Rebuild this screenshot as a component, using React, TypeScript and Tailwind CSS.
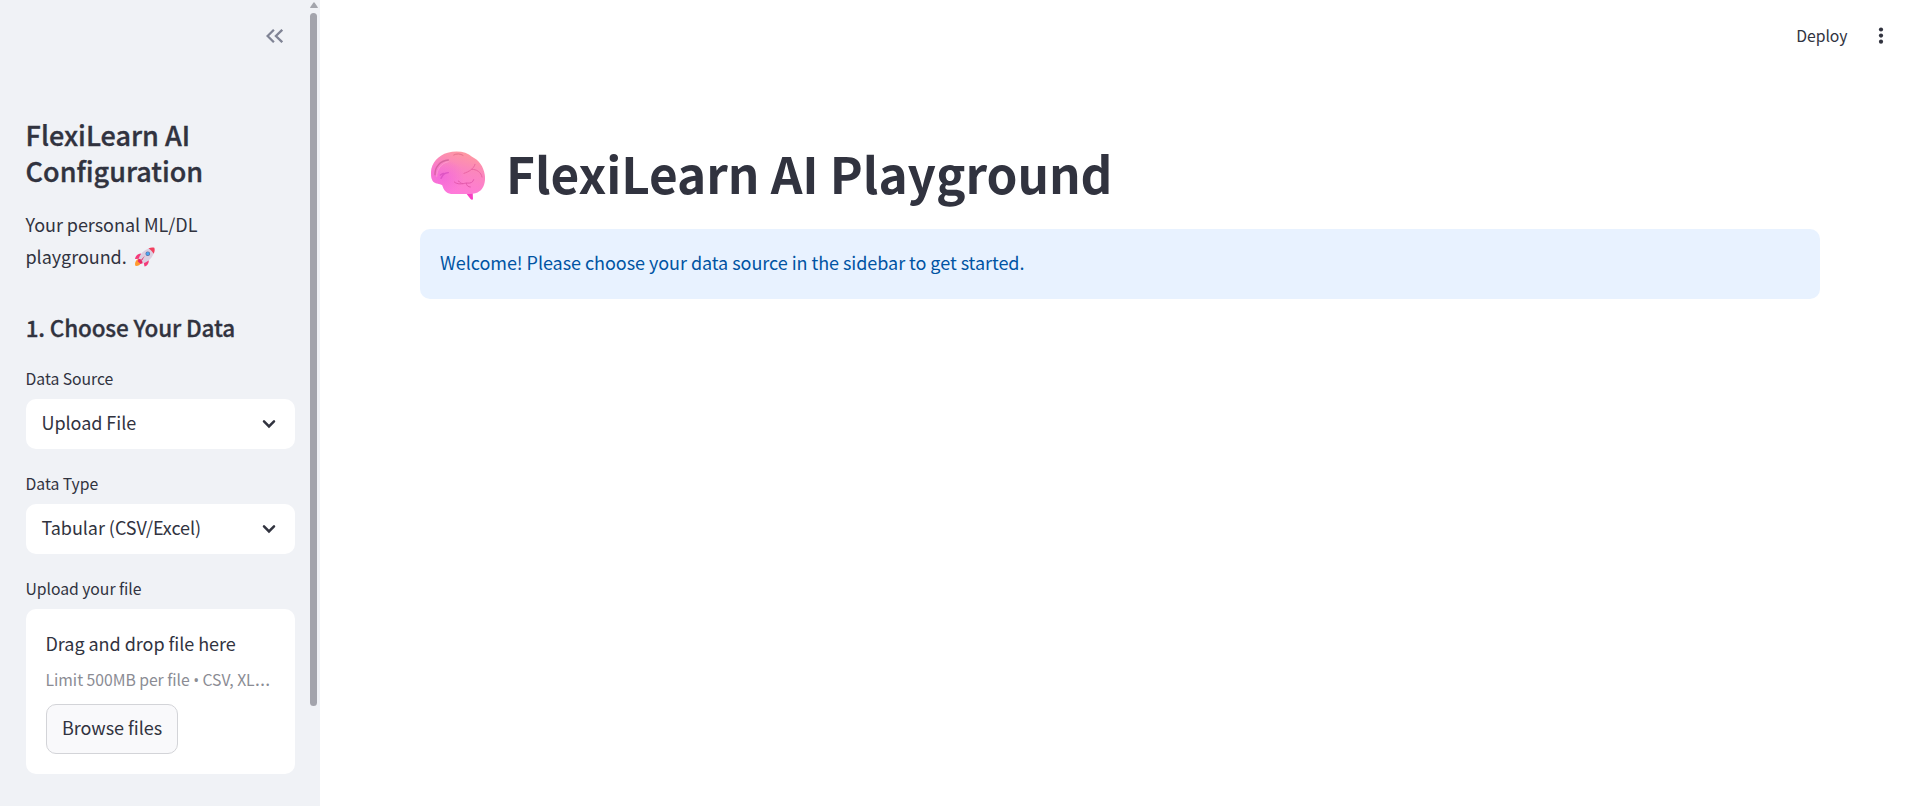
import React from "react";

function Brain() {
  return (
    <svg viewBox="0 0 165 150" className="h-[50px] w-[55px] shrink-0" aria-hidden="true">
      <defs>
        <linearGradient id="brainFill" x1="0.75" y1="0" x2="0.35" y2="1">
          <stop offset="0" stopColor="#ff9c9c" />
          <stop offset="0.4" stopColor="#fb86bd" />
          <stop offset="1" stopColor="#ff78dc" />
        </linearGradient>
        <radialGradient id="brainShade" cx="0.2" cy="0.6" r="0.42">
          <stop offset="0" stopColor="#f062dd" stopOpacity="0.7" />
          <stop offset="1" stopColor="#f062dd" stopOpacity="0" />
        </radialGradient>
      </defs>
      <path d="M103 124 L125 124 L126 145 Q122 148 118 143 Z" fill="#f83fc4" />
      <path d="M0 67 C-1 38 22 12 50 5 C78 -3 107 2 123 17 C144 27 158 47 161 70 C165 92 158 113 145 121 C139 127 128 129 116 129 L60 129 C45 127 37 116 34 103 C28 97 10 101 4 88 C1 82 0 75 0 67 Z" fill="url(#brainFill)" />
      <path d="M0 67 C-1 38 22 12 50 5 C78 -3 107 2 123 17 C144 27 158 47 161 70 C165 92 158 113 145 121 C139 127 128 129 116 129 L60 129 C45 127 37 116 34 103 C28 97 10 101 4 88 C1 82 0 75 0 67 Z" fill="url(#brainShade)" />
      <g fill="none" strokeLinecap="round" strokeWidth="3" opacity="0.8">
        <path d="M12 71 C11 50 26 29 52 27" stroke="#cf5f98" strokeWidth="4" />
        <path d="M17 76 C17 56 30 36 52 32" stroke="#ff9fd0" strokeWidth="3" />
        <path d="M68 12 C76 7 88 8 96 13" stroke="#e06a87" />
        <path d="M30 82 C36 70 40 66 52 65 M40 68 C36 66 33 68 28 72" stroke="#d84fc0" strokeWidth="4" />
        <path d="M132 40 C128 54 114 62 99 67 M122 55 C136 54 151 64 153 78" stroke="#e75e9e" />
        <path d="M70 93 C78 101 94 99 106 96 C119 98 126 94 128 86 M82 90 C88 92 88 98 95 98 M106 97 C106 104 112 108 118 108" stroke="#df52a6" />
      </g>
    </svg>
  );
}

function Rocket() {
  return (
    <svg viewBox="0 0 64 60" className="ml-[7.5px] inline-block h-[20px] w-[21px] align-[-3px]" aria-hidden="true">
      <path d="M14 36 C3 40 2 51 4 57 C13 58 20 54 22 45 Z" fill="#ff9b2f" />
      <path d="M22 19 C10 19 4 29 3 36 L19 35 Z M45 40 C46 51 39 57 32 59 L29 44 Z" fill="#f43b7a" />
      <path d="M14 37 C17 23 30 7 48 3 L61 14 C58 31 43 46 25 50 Z" fill="#dccfe0" />
      <path d="M44 4 C51 0 58 0 62 2 C64 7 63 15 60 20 C56 13 51 8 44 4 Z" fill="#f2405f" />
      <path d="M13 37 C19 34 27 42 26 49 L20 51 L11 43 Z M33 26 L25 40 L20 41 Z" fill="#e92b68" />
      <circle cx="42" cy="20" r="7" fill="#5b6b9d" />
      <circle cx="42" cy="20" r="5" fill="#4aa5f2" />
    </svg>
  );
}

function Label({ children }: { children: React.ReactNode }) {
  return (
    <label className="-ml-[0.5px] mb-[7px] block pt-px text-[15.75px] leading-[26px] tracking-[-0.04px]">
      {children}
    </label>
  );
}

function Select({ label, value }: { label: string; value: string }) {
  return (
    <div className="mb-[21px]">
      <Label>{label}</Label>
      <div className="flex h-[50px] items-center justify-between rounded-[10px] bg-white pr-[19px] pl-[15.5px]">
        <span className="pb-1 text-[18px] leading-[30px] tracking-[-0.05px]">{value}</span>
        <svg viewBox="0 0 14 10" className="h-[10px] w-[14px]" aria-hidden="true">
          <path d="M2 2.4 L7 7.4 L12 2.4" fill="none" stroke="#31333f" strokeWidth="2.5" strokeLinecap="round" />
        </svg>
      </div>
    </div>
  );
}

export default function App() {
  return (
    <div className="flex h-[806px] w-full overflow-hidden bg-white font-['Noto_Sans_CJK_SC',sans-serif] text-[#31333f]">
      <aside className="flex w-[320px] shrink-0 bg-[#f0f2f6]">
        <div className="flex w-[309px] flex-col pr-[14px] pl-[26px]">
          <div className="flex h-[117px] justify-end pt-[29px] pr-[12px]">
            <svg viewBox="0 0 17 14" className="h-[14px] w-[17px]" aria-hidden="true">
              <path d="M7.9 0.8 L1.6 7 L7.9 13.2 M16.2 0.8 L9.9 7 L16.2 13.2" fill="none" stroke="#808495" strokeWidth="2.3" />
            </svg>
          </div>
          <h1 className="-ml-[0.4px] text-[27px] leading-[36px] font-medium [-webkit-text-stroke:0.35px_#31333f]">
            FlexiLearn AI
            <br />
            Configuration
          </h1>
          <p className="mt-[19px] -ml-[0.5px] text-[18px] leading-[32px] tracking-[-0.05px]">
            Your personal ML/DL
            <br />
            playground.
            <Rocket />
          </p>
          <h3 className="mt-10 mb-[23px] -ml-[0.3px] text-[22.5px] leading-[30px] font-medium tracking-[-0.16px] [-webkit-text-stroke:0.3px_#31333f]">
            1. Choose Your Data
          </h3>
          <Select label="Data Source" value="Upload File" />
          <Select label="Data Type" value="Tabular (CSV/Excel)" />
          <Label>Upload your file</Label>
          <div className="flex h-[165px] flex-col items-start rounded-[10px] bg-white px-[19.5px] pt-[19px]">
            <span className="text-[18px] leading-[30px] tracking-[-0.04px]">Drag and drop file here</span>
            <span className="mt-[9px] text-[15.75px] leading-[26px] tracking-[-0.04px] whitespace-nowrap text-[#8b8c94]">
              Limit 500MB per file <span className="font-['Open_Sans',sans-serif]">•</span> CSV, XL
              <span className="font-['Open_Sans',sans-serif] text-[20px] leading-none">…</span>
            </span>
            <button className="mt-[11px] ml-[0.5px] h-[50px] w-[132px] rounded-[10px] border border-[#d3d4d8] bg-[#f9f9fb] pb-1 text-[18px] leading-[30px] tracking-[-0.05px]">
              Browse files
            </button>
          </div>
        </div>
        <div className="flex w-[9px] flex-col items-center pt-[2px]">
          <svg viewBox="0 0 8 6" className="h-[6px] w-[8px]" aria-hidden="true">
            <path d="M0.7 6 Q-0.2 6 0.4 5 L3.3 0.7 Q4 -0.2 4.7 0.7 L7.6 5 Q8.2 6 7.3 6 Z" fill="#a3a5ac" />
          </svg>
          <div className="mt-[5px] h-[693px] w-[7px] rounded-full bg-[#a3a4ac]" />
        </div>
      </aside>
      <main className="flex min-w-0 flex-1 flex-col">
        <header className="flex h-[75px] items-start justify-end pr-[32.5px]">
          <span className="pt-[23px] text-[15.75px] leading-[26px] tracking-[-0.03px]">Deploy</span>
          <svg viewBox="0 0 6 18" className="mt-[27px] ml-[30px] h-[18px] w-[6px]" aria-hidden="true">
            <g fill="#31333f">
              <circle cx="3" cy="2.5" r="2.1" />
              <circle cx="3" cy="8.6" r="2.1" />
              <circle cx="3" cy="14.7" r="2.1" />
            </g>
          </svg>
        </header>
        <div className="pr-[96px] pl-[100px]">
          <div className="flex h-[154px] items-start pt-[76px] pl-[11px]">
            <Brain />
            <h1 className="-mt-[15px] ml-[20px] text-[49.5px] leading-[74px] font-bold tracking-[-0.04px] whitespace-nowrap">
              FlexiLearn AI Playground
            </h1>
          </div>
          <div className="flex h-[70px] items-center rounded-[10px] bg-[#e8f2ff] px-5 pb-1 text-[18px] leading-[30px] tracking-[-0.05px] text-[#0054a3]">
            Welcome! Please choose your data source in the sidebar to get started.
          </div>
        </div>
      </main>
    </div>
  );
}
